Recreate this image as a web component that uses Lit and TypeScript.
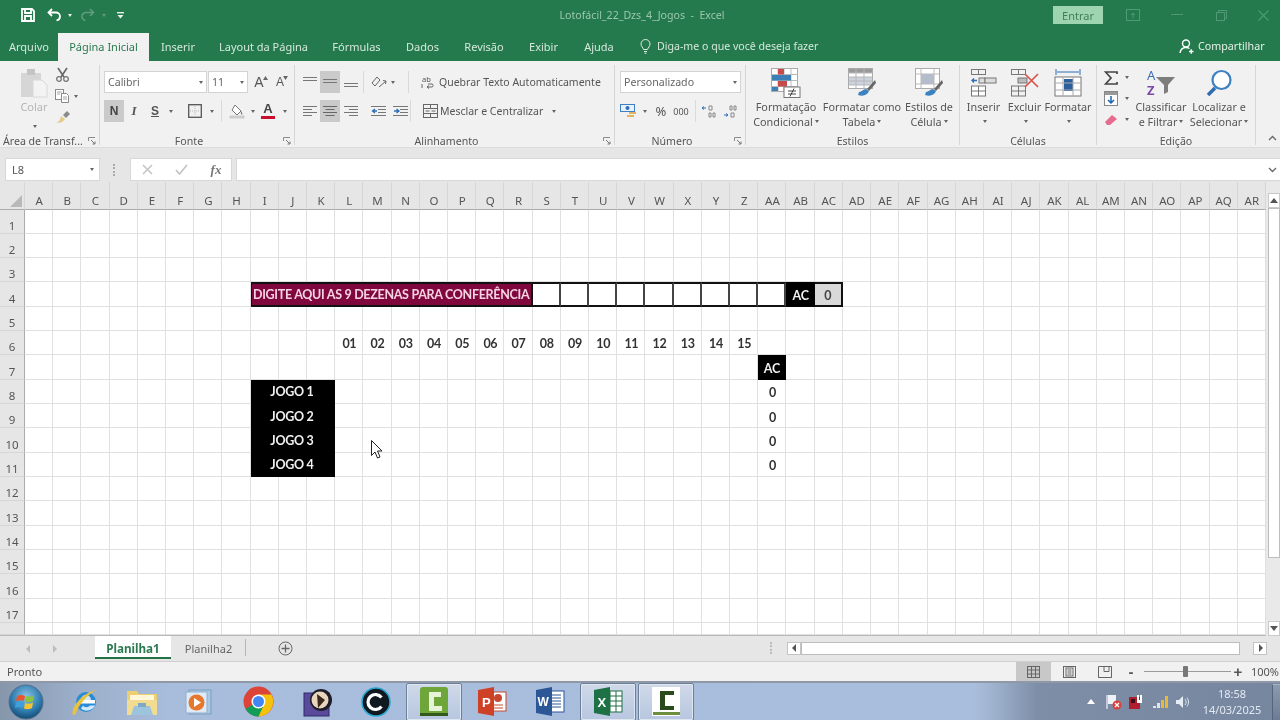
import { LitElement, html, css } from "lit";
import { customElement } from "lit/decorators.js";

type Item = [number, unknown, string?];
const row = (items: Item[], cls = "") => html`<div class="row ${cls}">${items.map(([w, c, k]) => html`<span class="s ${k ?? ""}" style="width:${w}px">${c}</span>`)}</div>`;
const caret = html`<i class="c"></i>`;
const wcaret = html`<i class="c w"></i>`;
const dcaret = html`<i class="c dim"></i>`;

const I = {
  save: html`<svg width="16" height="16" viewBox="0 0 16 16" fill="none" stroke="#fff" stroke-width="1.8"><path d="M2 2h10l2 2v10H2z"/><path d="M5 2v4h6V2M5 14V9h6v5"/></svg>`,
  undo: html`<svg width="16" height="14" viewBox="0 0 16 14" fill="none" stroke="#fff" stroke-width="1.8"><path d="M5 1L1.5 4.5 5 8M2 4.5h7a4 4 0 0 1 4 4c0 2-1.5 3.500-3.500 4"/></svg>`,
  redo: html`<svg width="16" height="14" viewBox="0 0 16 14" fill="none" stroke="#5f9d7b" stroke-width="1.6"><path d="M11 1l3.500 3.500L11 8M14 4.500H7a4 4 0 0 0-4 4c0 2 1.500 3.500 3.500 4"/></svg>`,
  qat: html`<svg width="7" height="7" viewBox="0 0 7 7" fill="#e8f2ec"><rect y="0" width="7" height="1.400"/><path d="M.5 3h6L3.500 6.500z"/></svg>`,
  touch: html`<svg width="14" height="12" viewBox="0 0 14 12" fill="none" stroke="#4f9a72"><rect x=".5" y=".5" width="13" height="11"/><path d="M7 9V4M5 6l2-2 2 2"/></svg>`,
  min: html`<svg width="12" height="2"><rect width="12" height="1" fill="#4f9a72"/></svg>`,
  rest: html`<svg width="11" height="11" viewBox="0 0 11 11" fill="none" stroke="#4f9a72"><rect x=".5" y="2.500" width="8" height="8"/><path d="M2.500 2.500V.5h8v8H8.500"/></svg>`,
  close: html`<svg width="11" height="11" viewBox="0 0 11 11" stroke="#4f9a72" stroke-width="1.100"><path d="M.5.5l10 10M10.500.5l-10 10"/></svg>`,
  bulb: html`<svg width="11" height="15" viewBox="0 0 11 15" fill="none" stroke="#dcebe2"><path d="M3.500 10.500C3 8.500 1 7.500 1 5a4.500 4.500 0 0 1 9 0c0 2.500-2 3.500-2.500 5.500zM4 12.500h3M4.500 14.200h2"/></svg>`,
  person: html`<svg width="15" height="15" viewBox="0 0 15 15" fill="none" stroke="#fff" stroke-width="1.400"><circle cx="7" cy="4.500" r="3.500"/><path d="M1 14c.5-3.500 2.500-5.500 6-5.500 1.500 0 2.500.4 3.500 1M10 12.500h4.500M12.200 10.300v4.400"/></svg>`,
  paste: html`<svg width="28" height="30" viewBox="0 0 28 30"><rect x="1" y="5" width="20" height="24" fill="#d6d6d6"/><rect x="7" y="1" width="8" height="6" fill="#c4c4c4"/><path d="M13 12h9l5 5v12H13z" fill="#f3f3f3" stroke="#d8d8d8"/></svg>`,
  scissors: html`<svg width="15" height="15" viewBox="0 0 15 15" fill="none" stroke="#777" stroke-width="1.300"><circle cx="4" cy="12" r="2.300"/><circle cx="11" cy="12" r="2.300"/><path d="M3 1l6 9M12 1L6 10" stroke="#666" stroke-width="1.600"/></svg>`,
  copy: html`<svg width="15" height="14" viewBox="0 0 15 14" fill="#fff" stroke="#8a8a8a"><rect x=".5" y=".5" width="8" height="10"/><path d="M6.500 4.500h5l2 2v7h-7z"/><path d="M2 3h5M2 5h3M8 8h4M8 10h4" stroke="#a5a5a5"/></svg>`,
  painter: html`<svg width="16" height="14" viewBox="0 0 16 14"><path d="M8 5l4-4 3 3-4 4z" fill="#8a8a8a"/><path d="M1 12c3 0 4-2 5-6l4 3c-2 3-5 5-9 3z" fill="#e6cc8b"/></svg>`,
  launcher: html`<svg width="8" height="8" viewBox="0 0 8 8" fill="none" stroke="#8c8c8c"><path d="M.5 4V.5H7"/><path d="M3 3l4 4M7 4.500V7H4.500" stroke="#777"/></svg>`,
  growA: html`<svg width="5" height="4" viewBox="0 0 5 4" fill="#666"><path d="M0 4l2.500-4L5 4z"/></svg>`,
  shrinkA: html`<svg width="5" height="4" viewBox="0 0 5 4" fill="#666"><path d="M0 0l2.500 4L5 0z"/></svg>`,
  border: html`<svg width="14" height="14" viewBox="0 0 14 14" fill="none"><rect x=".7" y=".7" width="12.600" height="12.600" stroke="#555" stroke-width="1.300"/><path d="M7 2v10M2 7h10" stroke="#bbb" stroke-dasharray="1 1"/></svg>`,
  fill: html`<svg width="16" height="15" viewBox="0 0 16 15"><path d="M6 1l6 6-4 4-5-5z" fill="#fff" stroke="#777"/><path d="M12 7c1 1.500 2 3 1 3.500s-1.500-1.500-1-3.500z" fill="#777"/><rect x="1" y="12" width="14" height="2" fill="#d9d9d9" stroke="#aaa" stroke-width=".5"/></svg>`,
  vt: html`<svg width="14" height="12" viewBox="0 0 14 12" stroke="#777"><path d="M0 1.500h14M0 4.500h14"/></svg>`,
  vm: html`<svg width="14" height="8" viewBox="0 0 14 8" stroke="#777"><path d="M0 1.500h14M0 4.500h14"/></svg>`,
  vb: html`<svg width="14" height="12" viewBox="0 0 14 12" stroke="#777"><path d="M0 7.500h14M0 10.500h14"/></svg>`,
  al: html`<svg width="14" height="12" viewBox="0 0 14 12" stroke="#777"><path d="M0 1.500h14M0 4.500h9M0 7.500h14M0 10.500h9"/></svg>`,
  ac: html`<svg width="14" height="12" viewBox="0 0 14 12" stroke="#666"><path d="M0 1.500h14M2.500 4.500h9M0 7.500h14M2.500 10.500h9"/></svg>`,
  ar: html`<svg width="14" height="12" viewBox="0 0 14 12" stroke="#777"><path d="M0 1.500h14M5 4.500h9M0 7.500h14M5 10.500h9"/></svg>`,
  orient: html`<svg width="17" height="15" viewBox="0 0 17 15" fill="none" stroke="#666"><path d="M2 8l5-6 3 3-5 6zM9 12l7-6M13 5.500l3 .5-.5 3" /></svg>`,
  outdent: html`<svg width="15" height="12" viewBox="0 0 15 12"><path d="M0 1.500h15M7 4.500h8M7 7.500h8M0 10.500h15" stroke="#777"/><path d="M6 6H2M4 4L1.500 6 4 8" fill="none" stroke="#2c6fb7" stroke-width="1.300"/></svg>`,
  indent: html`<svg width="15" height="12" viewBox="0 0 15 12"><path d="M0 1.500h15M7 4.500h8M7 7.500h8M0 10.500h15" stroke="#777"/><path d="M1 6h4M3.500 4L6 6 3.500 8" fill="none" stroke="#2c6fb7" stroke-width="1.300"/></svg>`,
  wrap: html`<svg width="16" height="16" viewBox="0 0 16 16"><text x="2" y="8" font-family="Noto Sans" font-size="7.500" fill="#555">ab</text><path d="M7 13h5c1.500 0 1.500-3 0-3H8M7 13l2-1.500M7 13l2 1.500M2 10v4" fill="none" stroke="#666"/></svg>`,
  merge: html`<svg width="15" height="14" viewBox="0 0 15 14" fill="none" stroke="#666"><rect x=".5" y=".5" width="14" height="13"/><path d="M.5 4.500h14M.5 9.500h14M2.500 7h4M12.500 7h-4M7.500 .5v4M7.500 9.500v4"/></svg>`,
  accounting: html`<svg width="17" height="17" viewBox="0 0 17 17"><rect x=".5" y="1.500" width="14" height="7" fill="#e8f1fa" stroke="#3b7fc4"/><circle cx="7.500" cy="5" r="2" fill="#2c6fb7"/><rect x="9" y="9" width="7" height="2" fill="#e3b35b"/><rect x="7" y="12" width="7" height="2" fill="#e3b35b"/></svg>`,
  decInc: html`<svg width="17" height="13" viewBox="0 0 17 13"><path d="M5 3H1M3 1.500L1 3l2 1.500" fill="none" stroke="#2c6fb7"/><path d="M8 1h3v4H8zM12 8h2v4h-2zM8 8h2v4H8z" fill="none" stroke="#888"/></svg>`,
  decDec: html`<svg width="17" height="13" viewBox="0 0 17 13"><path d="M1 10h4M3 8.500L5 10l-2 1.500" fill="none" stroke="#2c6fb7"/><path d="M7 1h2v4H7zM11 1h2v4h-2zM8 8h3v4H8z" fill="none" stroke="#888"/></svg>`,
  cond: html`<svg width="30" height="30" viewBox="0 0 30 30"><rect x=".5" y=".5" width="26" height="23" fill="#fff" stroke="#aaa"/><path d="M.5 6.500h26M.5 12.500h26M.5 18.500h26M7 .5v23M13 .5v23M20 .5v23" stroke="#bbb"/><rect x="7" y="1" width="6" height="5.500" fill="#c84a4a"/><rect x="1" y="7" width="19" height="5.500" fill="#3b7fb6"/><rect x="7" y="13" width="9" height="5.500" fill="#c84a4a"/><rect x="1" y="19" width="6" height="4" fill="#3b7fb6"/><rect x="13" y="19" width="16" height="10.500" fill="#fff" stroke="#777"/><path d="M17 23h8M17 26h8M23 20.500l-4 8" stroke="#444" fill="none"/></svg>`,
  table: html`<svg width="28" height="30" viewBox="0 0 28 30"><rect x=".5" y=".5" width="24" height="20" fill="#fff" stroke="#aaa"/><rect x="1" y="1" width="23" height="4" fill="#9a9a9a"/><rect x="1" y="9" width="23" height="8" fill="#ccd2de"/><path d="M.5 5h24M.5 9h24M.5 13h24M.5 17h24M8 .5v20M16 .5v20" stroke="#b8b8b8"/><path d="M27 12L19 21l2 2 7-8z" fill="#666"/><path d="M11 24c3 0 4-3 7-3l3 2c-1 3-5 6-11 4z" fill="#3c82c0"/></svg>`,
  styles: html`<svg width="28" height="30" viewBox="0 0 28 30"><rect x=".5" y=".5" width="24" height="20" fill="#fff" stroke="#aaa"/><rect x="6" y="6" width="13" height="10" fill="#b5bccb"/><path d="M6 .5v20M19 .5v20M.5 6h24M.5 16h24" stroke="#bbb"/><path d="M27 12L19 21l2 2 7-8z" fill="#666"/><path d="M11 24c3 0 4-3 7-3l3 2c-1 3-5 6-11 4z" fill="#3c82c0"/></svg>`,
  ins: html`<svg width="26" height="28" viewBox="0 0 26 28" fill="none" stroke="#777"><rect x=".5" y=".5" width="14" height="5"/><path d="M7.500.5v5"/><rect x=".5" y="17" width="14" height="10" fill="#fff"/><path d="M7.500 17v10M.5 22h14"/><rect x="8" y="9" width="6" height="5" fill="#ddd"/><rect x="14" y="9" width="11" height="5" fill="#ddd"/><path d="M6 11.500H1M3 9.500l-2 2 2 2" stroke="#2c6fb7" stroke-width="1.300"/></svg>`,
  del: html`<svg width="28" height="28" viewBox="0 0 28 28" fill="none" stroke="#777"><rect x=".5" y=".5" width="14" height="5"/><path d="M7.500.5v5"/><rect x=".5" y="17" width="14" height="10"/><path d="M7.500 17v10M.5 22h14"/><rect x="7" y="9" width="9" height="5" fill="#bbb"/><path d="M14 5l13 13M27 5L14 18" stroke="#d9534a" stroke-width="1.700"/></svg>`,
  fmt: html`<svg width="28" height="30" viewBox="0 0 28 30" fill="none" stroke="#777"><path d="M2 1v6M26 1v6M3 4h22" stroke="#2c6fb7"/><rect x="1" y="9" width="26" height="19" fill="#fff"/><rect x="10" y="11" width="9" height="12" fill="#2c5f9e" stroke="none"/><path d="M1 15h26M1 22h26M9 9v19M19 9v19" stroke="#aaa"/></svg>`,
  sigma: html`<svg width="14" height="14" viewBox="0 0 14 14" fill="none" stroke="#444" stroke-width="1.700"><path d="M13 3V1H1.500L7 7l-5.500 6H13v-2"/></svg>`,
  filldown: html`<svg width="14" height="15" viewBox="0 0 14 15"><rect x=".5" y=".5" width="13" height="14" fill="#fff" stroke="#888"/><rect x="1" y="1" width="12" height="3" fill="#999"/><path d="M7 5v7M4 9l3 3 3-3" fill="none" stroke="#1d63ad" stroke-width="1.500"/></svg>`,
  eraser: html`<svg width="14" height="12" viewBox="0 0 14 12"><path d="M1 8l7-7 5 4-7 6H3z" fill="#e66b8e"/></svg>`,
  sort: html`<svg class="ov" width="30" height="29" viewBox="0 0 30 29"><text x="1" y="12" font-family="Noto Sans" font-size="13" fill="#3c6fb4">A</text><text x="1" y="27" font-family="Noto Sans" font-size="13" font-weight="700" fill="#7a4aa8">Z</text><path d="M10 9h19l-7 8v7l-4 2V17z" fill="#7d7d7d"/></svg>`,
  find: html`<svg width="28" height="28" viewBox="0 0 28 28" fill="none"><circle cx="16.500" cy="11" r="9" stroke="#3c82c0" stroke-width="2.200" fill="#fff"/><path d="M3 26l7-7" stroke="#2f6db0" stroke-width="3.500"/></svg>`,
  chev: html`<svg width="9" height="6" viewBox="0 0 9 6" fill="none" stroke="#666" stroke-width="1.300"><path d="M1 5l3.500-3.500L8 5"/></svg>`,
  chevd: html`<svg width="9" height="6" viewBox="0 0 9 6" fill="none" stroke="#666" stroke-width="1.300"><path d="M1 1l3.500 3.500L8 1"/></svg>`,
  x: html`<svg width="11" height="11" viewBox="0 0 11 11" stroke="#c4c4c4" stroke-width="1.500"><path d="M1 1l9 9M10 1l-9 9"/></svg>`,
  check: html`<svg width="13" height="11" viewBox="0 0 13 11" fill="none" stroke="#c4c4c4" stroke-width="1.700"><path d="M1 6l3.500 4L12 1"/></svg>`,
  corner: html`<svg width="12" height="12" viewBox="0 0 12 12"><path d="M12 0v12H0z" fill="#b9b9b9"/></svg>`,
  plus: html`<svg width="15" height="15" viewBox="0 0 15 15" fill="none" stroke="#666"><circle cx="7.500" cy="7.500" r="6.500"/><path d="M3.500 7.500h8M7.500 3.500v8" stroke-width="1.300"/></svg>`,
  tl: html`<svg width="5" height="8" viewBox="0 0 5 8" fill="#bdbdbd"><path d="M4 0v8L0 4z"/></svg>`,
  tr: html`<svg width="5" height="8" viewBox="0 0 5 8" fill="#bdbdbd"><path d="M1 0v8l4-4z"/></svg>`,
  tld: html`<svg width="5" height="8" viewBox="0 0 5 8" fill="#555"><path d="M4 0v8L0 4z"/></svg>`,
  trd: html`<svg width="5" height="8" viewBox="0 0 5 8" fill="#555"><path d="M1 0v8l4-4z"/></svg>`,
  up: html`<svg width="8" height="5" viewBox="0 0 8 5" fill="#555"><path d="M0 5h8L4 0z"/></svg>`,
  dn: html`<svg width="8" height="5" viewBox="0 0 8 5" fill="#555"><path d="M0 0h8L4 5z"/></svg>`,
  vnormal: html`<svg width="13" height="12" viewBox="0 0 13 12" fill="none" stroke="#666"><rect x=".5" y=".5" width="12" height="11"/><path d="M4.500 .5v11M8.500 .5v11M.5 4h12M.5 8h12"/></svg>`,
  vpage: html`<svg width="13" height="12" viewBox="0 0 13 12" fill="none" stroke="#666"><rect x=".5" y=".5" width="12" height="11"/><rect x="3" y="2" width="7" height="8"/><path d="M4.500 4h4M4.500 6h4M4.500 8h4"/></svg>`,
  vbreak: html`<svg width="14" height="12" viewBox="0 0 14 12" fill="none" stroke="#666"><path d="M.5 11.500V.5h13v11zM6 .5v5h5V.5M.5 11.500h13" /></svg>`,
  orb: html`<svg width="36" height="36" viewBox="0 0 36 36"><defs><radialGradient id="o" cx=".5" cy=".35" r=".7"><stop offset="0" stop-color="#8fc5e6"/><stop offset=".6" stop-color="#2f7db0"/><stop offset="1" stop-color="#0e3f68"/></radialGradient></defs><circle cx="18" cy="18" r="17" fill="url(#o)" stroke="#52708c"/><path d="M9 12c3-1.500 5-1.500 8 0l-1 5c-3-1-5-1-8 0z" fill="#e8562f"/><path d="M18 12c3 1 5 1 8-.5l-1 5.500c-3 1.500-5 1.500-8 .5z" fill="#8bc43e"/><path d="M8 18c3-1 5-1 8 0l-1 6c-3-1.500-5-1.500-8 0z" fill="#3f9fdd"/><path d="M17 19c3 1 5 1 8-.5l-1 5.500c-3 1.500-5 1.500-8 .5z" fill="#f5c431"/></svg>`,
  ie: html`<svg width="30" height="30" viewBox="0 0 30 30"><circle cx="16" cy="15" r="10" fill="#2a8bd6"/><rect x="9" y="13" width="16" height="3.500" fill="#fff"/><path d="M11 13c0-3 2.500-5 5-5s5 2 5 5zM13 18.500c1 2 5 2.500 7 0h5c-2 5-10 7-14 3z" fill="#cfe8fa"/><path d="M3 28C0 22 12 5 27 3c-6 1-20 16-21 24z" fill="#e9c33f"/></svg>`,
  folder: html`<svg width="32" height="28" viewBox="0 0 32 28"><path d="M1 3h10l2 3h18v21H1z" fill="#eccf6f"/><rect x="4" y="7" width="24" height="5" fill="#fff7d8"/><path d="M1 12h30v15H1z" fill="#f2dc91"/><path d="M8 18h16l3 9H5z" fill="#9dc4dd"/><rect x="12" y="15" width="8" height="4" fill="#7da9c6"/></svg>`,
  wmp: html`<svg width="28" height="28" viewBox="0 0 28 28"><rect x="4" y="2" width="22" height="24" fill="#a9c8e4" stroke="#7b9cbd"/><rect x="1" y="4" width="21" height="21" fill="#dfeaf5" stroke="#8eb0d0"/><circle cx="11.500" cy="14.500" r="8" fill="#e8772e"/><path d="M9 10l7 4.500-7 4.500z" fill="#fff"/></svg>`,
  chrome: html`<svg width="31" height="31" viewBox="0 0 31 31"><circle cx="15.500" cy="15.500" r="15" fill="#db4437"/><path d="M15.500 15.500L2.500 23A15 15 0 0 0 15.500 30.500L23 15.500z" fill="#0f9d58"/><path d="M15.500 8.500h13A15 15 0 0 1 15.500 30.500l7-15z" fill="#f4c20d"/><circle cx="15.500" cy="15.500" r="7" fill="#fff"/><circle cx="15.500" cy="15.500" r="5.500" fill="#4285f4"/></svg>`,
  media: html`<svg width="30" height="30" viewBox="0 0 30 30"><rect x="1" y="6" width="25" height="23" fill="#5a4a9c" stroke="#2e2a66"/><circle cx="18" cy="13" r="11" fill="#1d1d2a"/><circle cx="17" cy="13" r="8.500" fill="#e9d6bd"/><path d="M14 7l8 6-7 8z" fill="#3a2a1e"/></svg>`,
  ccircle: html`<svg width="30" height="30" viewBox="0 0 30 30"><circle cx="15" cy="15" r="14" fill="#101820" stroke="#2aa7d0" stroke-width="1.500"/><path d="M20.500 10.500a7.500 7.500 0 1 0 0 9" fill="none" stroke="#fff" stroke-width="3.200"/></svg>`,
  cam: html`<svg width="30" height="31" viewBox="0 0 30 31"><rect x="1" y="1" width="28" height="29" rx="3" fill="#6ea63a"/><path d="M22 6H10v19h13v-5H15V11h7z" fill="#e7f3d8"/><rect x="1" y="27" width="28" height="3" fill="#33591d"/></svg>`,
  cam2: html`<svg width="30" height="31" viewBox="0 0 30 31"><rect x="1" y="1" width="28" height="29" fill="#fff"/><path d="M23 5H9v19h14v-4H14V9h9z" fill="#2a4a1c"/><rect x="2" y="26" width="27" height="3" fill="#6b8f3c"/></svg>`,
  ppt: html`<svg width="30" height="29" viewBox="0 0 30 29"><rect x="13" y="5" width="16" height="19" fill="#fff" stroke="#c8472f"/><circle cx="21" cy="11" r="4" fill="#c8472f"/><path d="M17 18h9M17 21h9" stroke="#c8472f"/><path d="M1 3l16-3v29L1 26z" fill="#cf4126"/><text x="5" y="20" font-family="Liberation Sans" font-weight="700" font-size="13" fill="#fff">P</text></svg>`,
  word: html`<svg width="30" height="29" viewBox="0 0 30 29"><rect x="13" y="4" width="16" height="21" fill="#fff" stroke="#2b5797"/><path d="M17 8h9M17 11h9M17 14h9M17 17h9M17 20h9" stroke="#2b5797"/><path d="M1 3l16-3v29L1 26z" fill="#2b5797"/><text x="2.500" y="19" font-family="Liberation Sans" font-weight="700" font-size="12" fill="#fff">W</text></svg>`,
  excel: html`<svg width="30" height="29" viewBox="0 0 30 29"><rect x="13" y="4" width="16" height="21" fill="#fff" stroke="#1e7145"/><path d="M17 4v21M23 4v21M13 9h16M13 14h16M13 19h16" stroke="#1e7145"/><path d="M1 3l16-3v29L1 26z" fill="#1e7145"/><text x="4.500" y="20" font-family="Liberation Sans" font-weight="700" font-size="13" fill="#fff">X</text></svg>`,
  trayup: html`<svg width="8" height="5" viewBox="0 0 8 5" fill="#fff"><path d="M0 5h8L4 0z"/></svg>`,
  flag: html`<svg width="16" height="16" viewBox="0 0 16 16"><path d="M1 1v14" stroke="#dde" stroke-width="1.500"/><path d="M2 1h8v9H2z" fill="#eef2f8"/><circle cx="11" cy="11" r="4.500" fill="#d8413e"/><path d="M9 9l4 4M13 9l-4 4" stroke="#fff" stroke-width="1.300"/></svg>`,
  shield: html`<svg width="16" height="16" viewBox="0 0 16 16"><rect x="1" y="3" width="11" height="12" fill="#b01e2e"/><rect x="3" y="5" width="4" height="4" fill="#3a1016"/><path d="M10 1v7M13 1v7" stroke="#fff" stroke-width="2"/><rect x="9" y="6" width="5" height="3" fill="#fff"/></svg>`,
  signal: html`<svg width="16" height="14" viewBox="0 0 16 14"><path d="M1 11h3v2H1z" fill="#dfe5ee"/><path d="M5 8h3v5H5z" fill="#dfe5ee"/><path d="M9 5h3v8H9z" fill="#e9b93a"/><path d="M13 1h3v12h-3z" fill="#e9b93a"/></svg>`,
  vol: html`<svg width="14" height="14" viewBox="0 0 14 14"><path d="M1 5h3l4-4v12L4 9H1z" fill="#e7edf5"/><path d="M10 4c1.500 2 1.500 4 0 6M12 2.500c2 3 2 6 0 9" fill="none" stroke="#dfe5ee"/></svg>`,
};

const cols = Array.from({ length: 44 }, (_, i) => (i < 26 ? String.fromCharCode(65 + i) : "A" + String.fromCharCode(65 + i - 26)));

type Cell = { c: number; r: number; cs?: number; text?: string; k?: string };
function buildCells(): Cell[] {
  const out: Cell[] = [];
  const taken = new Set<string>();
  const put = (x: Cell) => {
    out.push(x);
    for (let i = 0; i < (x.cs ?? 1); i++) taken.add(`${x.c + i}:${x.r}`);
  };
  put({ c: 8, r: 4, cs: 10, text: "DIGITE AQUI AS 9 DEZENAS PARA CONFERÊNCIA", k: "banner" });
  for (let i = 18; i < 27; i++) put({ c: i, r: 4, k: "inp" });
  put({ c: 27, r: 4, text: "AC", k: "black edge" });
  put({ c: 28, r: 4, text: "0", k: "gray" });
  for (let i = 0; i < 15; i++) put({ c: 11 + i, r: 6, text: String(i + 1).padStart(2, "0"), k: "b" });
  put({ c: 26, r: 7, text: "AC", k: "black low" });
  for (let i = 0; i < 4; i++) {
    put({ c: 8, r: 8 + i, cs: 3, text: `JOGO ${i + 1}`, k: "black jogo" });
    put({ c: 26, r: 8 + i, text: "0", k: "b low" });
  }
  for (let r = 1; r <= 18; r++) for (let c = 0; c < 44; c++) if (!taken.has(`${c}:${r}`)) put({ c, r });
  return out;
}
const cells = buildCells();

const tabs: [string, number, string?][] = [["Arquivo", 58], ["Página Inicial", 91, "active"], ["Inserir", 58], ["Layout da Página", 113], ["Fórmulas", 73], ["Dados", 59], ["Revisão", 64], ["Exibir", 55], ["Ajuda", 56]];

const big = (w: number, icon: unknown, l1: string, l2: unknown) => html`
  <div class="big" style="width:${w}px"><div class="bi">${icon}</div><div class="bl">${l1}</div><div class="bl">${l2}</div></div>`;

const group = (w: number, label: string, labelCls: string, launcher: boolean, body: unknown) => html`
  <section class="group" style="width:${w}px"><div class="gb">${body}</div><div class="gl ${labelCls} ${launcher ? "hasl" : ""}"><span>${label}</span>${launcher ? html`<span class="lau">${I.launcher}</span>` : ""}</div></section>`;

const taskItems: [unknown, number, string?][] = [[I.ie, 57.5], [I.folder, 56.5], [I.wmp, 58.5], [I.chrome, 60], [I.media, 58], [I.ccircle, 58], [I.cam, 58.5, "on"], [I.ppt, 58], [I.word, 58], [I.excel, 58, "on"], [I.cam2, 58, "on"]];

@customElement("app-root")
export class AppRoot extends LitElement {
  static styles = css`
    :host { display: block; width: 1280px; height: 720px; overflow: hidden; font-family: "Noto Sans", "Open Sans", sans-serif; font-size: 11px; color: #555; }
    .app { width: 1280px; height: 720px; display: flex; flex-direction: column; position: relative; background: #f1f1f1; filter: blur(0.3px); }
    .row { display: flex; align-items: center; height: 22px; }
    .s { display: flex; align-items: center; justify-content: center; flex: none; height: 100%; }
    .c { display: inline-block; flex: none; width: 0; height: 0; border: 2.5px solid transparent; border-top: 3px solid #666; border-bottom: 0; margin-left: 2px; vertical-align: middle; }
    .c.w { border-top-color: #e8f2ec; }
    .c.dim { border-top-color: #5f9d7b; }
    svg { display: block; flex: none; }
    svg.ov { overflow: visible; }

    .title { height: 33px; background: #247a4c; display: grid; grid-template-columns: 402px 480px 398px; align-items: center; padding-bottom: 3px; box-sizing: border-box; }
    .title .row { height: 30px; }
    .doc { text-align: center; color: #9cc7ad; font-size: 10.6px; white-space: pre; }
    .entrar { width: 50px; height: 18px; background: #9fd4b0; color: #3f7f5b; display: flex; align-items: center; justify-content: center; font-size: 11px; }

    .tabs { height: 28px; background: #247a4c; display: flex; align-items: stretch; color: #d5e8dc; }
    .tab { display: flex; align-items: center; justify-content: center; flex: none; padding-bottom: 2px; box-sizing: border-box; }
    .tab.active { background: #f1f1f1; color: #2a7a50; }
    .tell { margin-left: 13px; display: flex; align-items: center; gap: 6px; color: #d5e8dc; padding-bottom: 2px; font-size: 10.6px; }
    .share { margin-left: auto; width: 101px; display: flex; align-items: center; gap: 4px; color: #e6f1ea; padding-bottom: 2px; font-size: 10.7px; }

    .ribbon { height: 87px; background: #f1f1f1; display: flex; padding-top: 4px; box-sizing: border-box; border-bottom: 1px solid #dcdcdc; }
    .group { flex: none; height: 80px; border-right: 1px solid #d6d6d6; box-sizing: border-box; display: flex; flex-direction: column; }
    .gb { height: 66px; flex: none; display: flex; }
    .gl { flex: 1; display: flex; align-items: center; justify-content: center; position: relative; font-size: 10.6px; color: #555; padding-top: 3px; box-sizing: border-box; }
    .gl.hasl { padding-right: 16px; }
    .gl.left { justify-content: flex-start; padding-left: 3px; padding-right: 0; }
    .lau { position: absolute; right: 3px; top: 6px; }
    .col { display: flex; flex-direction: column; }
    .rows { padding-top: 6px; gap: 7px; }
    .box { height: 22px; background: #fff; border: 1px solid #d3d3d3; box-sizing: border-box; display: flex; align-items: center; justify-content: space-between; padding: 0 3px; font-size: 10.6px; color: #666; }
    .sel { background: #cacaca; }
    .bld { font-weight: 700; font-size: 12px; color: #444; font-family: "Liberation Sans", sans-serif; }
    .ital { font-style: italic; font-size: 13px; font-family: "Liberation Serif", serif; font-weight: 700; color: #555; }
    .und { text-decoration: underline; font-weight: 700; font-size: 12px; font-family: "Liberation Sans", sans-serif; }
    .vsep { border-right: 1px solid #dadada; height: 22px; box-sizing: border-box; }
    .ftxt { justify-content: flex-start; white-space: nowrap; color: #555; font-size: 10.5px; }
    .A1 { font-family: "Liberation Sans", sans-serif; font-size: 14px; color: #555; align-items: center; padding-left: 2px; box-sizing: border-box; }
    .A1 svg { align-self: flex-start; margin: 5px 0 0 -1px; }
    .A2 { font-size: 12px; }
    .fcolor { flex-direction: column; gap: 1px; }
    .fcolor b { font-family: "Liberation Sans", sans-serif; font-size: 13px; line-height: 12px; color: #444; }
    .fcolor u { display: block; width: 14px; height: 3px; background: #c8102e; }
    .big { display: flex; flex-direction: column; align-items: center; flex: none; }
    .bi { height: 34px; display: flex; align-items: center; justify-content: center; padding-top: 1px; box-sizing: border-box; }
    .bl { height: 15px; line-height: 15px; white-space: nowrap; color: #555; display: flex; align-items: center; font-size: 10.8px; }
    .mini { width: 37px; padding: 2px 0 0 7px; box-sizing: border-box; }
    .mini .row { height: 21px; justify-content: flex-start; gap: 5px; }
    .spacer14 { width: 14px; flex: none; }
    .spacer2 { width: 2px; flex: none; }
    .colar { width: 40px; align-items: center; color: #b5b5b5; padding-top: 3px; flex: none; }
    .colar div:nth-child(2) { margin-top: 1px; line-height: 15px; }
    .colar div:nth-child(3) { margin-top: 3px; }
    .mcol { width: 24px; align-items: flex-start; gap: 7px; padding: 2px 0 0 1px; box-sizing: border-box; flex: none; }
    .mcol div { display: flex; align-items: center; }
    .mcol .c { margin-left: 4px; }
    .chevwrap { display: flex; align-items: flex-end; padding: 0 0 6px 12px; }

    .fbar { height: 34px; background: #e6e6e6; display: flex; align-items: flex-start; padding-top: 10px; box-sizing: border-box; flex: none; }
    .namebox { margin-left: 5px; width: 95px; height: 23px; background: #fff; border: 1px solid #d8d8d8; box-sizing: border-box; display: flex; align-items: center; justify-content: space-between; padding: 0 5px 0 6px; color: #555; }
    .dots { width: 30px; height: 23px; display: flex; align-items: center; justify-content: center; }
    .dots i { display: block; width: 2px; height: 12px; border-left: 2px dotted #aaa; }
    .fx { width: 102px; height: 23px; background: #fff; border: 1px solid #d8d8d8; box-sizing: border-box; display: flex; }
    .fx .row { height: 21px; }
    .fxt { font-family: "Liberation Serif", serif; font-style: italic; font-weight: 700; font-size: 13px; color: #777; }
    .finput { margin-left: 4px; width: 1044px; height: 23px; background: #fff; border: 1px solid #d8d8d8; border-right: 0; box-sizing: border-box; display: flex; align-items: center; justify-content: flex-end; padding-right: 3px; }

    .sheetwrap { height: 454px; flex: none; display: flex; background: #fff; }
    .sheet { width: 1266px; display: grid; grid-template-columns: 25px repeat(44, 28.21px); grid-template-rows: 27.5px repeat(17, 24.33px) 1fr; border-bottom: 1px solid #b9b9b9; box-sizing: border-box; font-family: Lato, "Liberation Sans", sans-serif; overflow: hidden; }
    .corner { background: #e6e6e6; border-bottom: 1px solid #ababab; border-right: 1px solid #d8d8d8; display: flex; align-items: flex-end; justify-content: flex-end; padding: 0 2px 2px 0; box-sizing: border-box; }
    .ch { background: #e6e6e6; border-bottom: 1px solid #ababab; border-right: 1px solid #d6d6d6; box-sizing: border-box; display: flex; align-items: flex-end; justify-content: center; padding: 0 0 0 1px; font-family: "Noto Sans", sans-serif; font-size: 11.5px; line-height: 17px; color: #555; }
    .rh { background: #e6e6e6; border-bottom: 1px solid #d6d6d6; border-right: 1px solid #ababab; box-sizing: border-box; display: flex; align-items: center; justify-content: center; padding-top: 8px; font-family: "Noto Sans", sans-serif; font-size: 11.5px; color: #555; }
    .cell { border-right: 1px solid #e0e0e0; border-bottom: 1px solid #e0e0e0; box-sizing: border-box; display: flex; align-items: center; justify-content: center; white-space: nowrap; font-size: 12.5px; letter-spacing: -0.3px; font-weight: 700; color: #333; background: #fff; min-width: 0; }
    .cell.b { padding: 2px 0 0 1px; }
    .cell.low { padding-top: 3px; }
    .banner { background: #7f073d; color: #f6d3e2; border: 2px solid #111; margin-left: -1px; }
    .inp { border-top: 2px solid #111; border-bottom: 2px solid #111; border-right: 2px solid #444; }
    .black { background: #000; color: #f0f0f0; border-color: #000; }
    .jogo { margin-left: -1px; padding-top: 1px; }
    .edge { border: 2px solid #000; padding-top: 1px; }
    .gray { background: #d9d9d9; color: #444; border: 2px solid #111; border-left: 0; padding-top: 1px; }

    .vs { width: 14px; background: #e9e9e9; display: flex; flex-direction: column; align-items: center; padding: 11px 0 0 2px; box-sizing: border-box; }
    .vs .ar { height: 15px; width: 12px; background: #fff; display: flex; align-items: center; justify-content: center; border: 1px solid #c9c9c9; box-sizing: border-box; flex: none; }
    .vs .th { height: 350px; width: 12px; background: #fff; border: 1px solid #bdbdbd; box-sizing: border-box; flex: none; }
    .vs .sp { flex: 1; }

    .stabs { height: 26px; flex: none; background: #e6e6e6; display: flex; align-items: stretch; border-bottom: 1px solid #cfcfcf; box-sizing: border-box; }
    .stabs > .row { height: 100%; }
    .sht1 { width: 76px; background: #fff; border-bottom: 2px solid #217346; box-sizing: border-box; height: 23px; display: flex; align-items: center; justify-content: center; padding-top: 2px; font-weight: 700; font-size: 11.7px; color: #2b7a52; flex: none; }
    .sht2 { width: 75px; height: 23px; display: flex; align-items: center; justify-content: center; padding-top: 2px; box-sizing: border-box; font-size: 11px; color: #666; flex: none; position: relative; }
    .sht2::after { content: ""; position: absolute; right: 0; top: 3px; height: 17px; border-right: 1px solid #b5b5b5; }
    .hscroll { margin-left: auto; display: flex; align-items: center; height: 24px; padding-right: 13px; }
    .hd { width: 16px; display: flex; justify-content: center; margin-right: 8px; }
    .hd i { display: block; height: 12px; border-left: 2px dotted #bbb; }
    .hb { width: 14px; height: 13px; background: #fff; border: 1px solid #c4c4c4; box-sizing: border-box; display: flex; align-items: center; justify-content: center; flex: none; }
    .ht { width: 439px; height: 13px; background: #fff; border: 1px solid #bdbdbd; box-sizing: border-box; flex: none; }
    .hg { width: 13px; }

    .status { height: 21px; flex: none; background: #f1f1f1; display: flex; align-items: center; border-bottom: 2px solid #8e98a6; box-sizing: border-box; padding-left: 7px; color: #555; }
    .status > .row { height: 19px; margin-left: auto; }
    .vsel { background: #c8c8c8; }
    .slider { width: 87px; height: 1px; background: #9a9a9a; position: relative; }
    .slider i { position: absolute; left: 39px; top: -5px; width: 5px; height: 11px; background: #777; border-radius: 1px; }
    .pm { font-family: "Liberation Sans", sans-serif; font-size: 15px; font-weight: 700; color: #555; }

    .task { height: 37px; flex: none; display: flex; align-items: stretch; background: linear-gradient(90deg, #8696ab 0, #9aadc8 70px, #a8bddc 170px, #a9bedd 76%, #a4b8d5 77%, #7e8ea7 81%, #76869f 100%); }
    .start { width: 56px; height: 37px; flex: none; display: flex; align-items: center; padding-left: 8px; box-sizing: border-box; }
    .tb { display: flex; align-items: center; justify-content: center; flex: none; height: 37px; box-sizing: border-box; }
    .tb.on > span { width: 54px; height: 36px; display: flex; align-items: center; justify-content: center; border: 1px solid #6f7f97; border-radius: 2px; background: linear-gradient(#cfd9e9, #b7c7df); box-shadow: inset 0 0 0 1px #dde6f1; }
    .tray { margin-left: auto; display: flex; align-items: center; }
    .clock { width: 68px; text-align: center; color: #e3e9f2; font-size: 11px; line-height: 16px; }
    .desk { width: 8px; height: 36px; background: linear-gradient(#8c9ab0, #6d7c94); border-left: 1px solid #56657c; border-top: 1px solid #a8b3c4; box-sizing: border-box; margin-left: 6px; }

    .cursor { position: absolute; left: 371px; top: 440px; }
  `;

  render() {
    return html`<div class="app">
      <header class="title">
        ${row([[20, ""], [16, I.save], [11, ""], [16, I.undo], [2, ""], [8, wcaret], [6, ""], [16, I.redo], [4, ""], [8, dcaret], [8, ""], [10, I.qat]])}
        <div class="doc">Lotofácil_22_Dzs_4_Jogos  -  Excel</div>
        ${row([[171, ""], [50, html`<div class="entrar">Entrar</div>`], [10, ""], [40, I.touch], [17, ""], [14, I.min], [30, ""], [14, I.rest], [28, ""], [14, I.close]])}
      </header>
      <nav class="tabs">
        ${tabs.map(([t, w, k]) => html`<div class="tab ${k ?? ""}" style="width:${w}px">${t}</div>`)}
        <div class="tell">${I.bulb}<span>Diga-me o que você deseja fazer</span></div>
        <div class="share">${I.person}<span>Compartilhar</span></div>
      </nav>
      <div class="ribbon">
        ${group(100, "Área de Transf...", "left", true, html`
          <div class="spacer14"></div>
          <div class="col colar"><div>${I.paste}</div><div>Colar</div><div>${caret}</div></div>
          <div class="col mcol"><div>${I.scissors}</div><div>${I.copy}${caret}</div><div>${I.painter}</div></div>`)}
        ${group(195, "Fonte", "", true, html`
          <div class="col rows">
            ${row([[4, ""], [103, html`<div class="box" style="width:103px"><span>Calibri</span>${caret}</div>`], [1, ""], [40, html`<div class="box" style="width:40px"><span>11</span>${caret}</div>`], [1, ""], [22, html`<span>A</span>${I.growA}`, "A1"], [20, html`<span class="A2">A</span>${I.shrinkA}`, "A1"]])}
            ${row([[4, ""], [20, html`<span class="bld">N</span>`, "sel"], [20, html`<span class="ital">I</span>`], [1, ""], [20, html`<span class="und">S</span>`], [10, caret], [12, ""], [16, I.border], [3, ""], [10, caret], [6, "", "vsep"], [7, ""], [16, I.fill], [2, ""], [10, caret], [3, ""], [16, html`<b>A</b><u></u>`, "fcolor"], [16, caret]])}
          </div>`)}
        ${group(320, "Alinhamento", "", true, html`
          <div class="col rows">
            ${row([[4, ""], [21, I.vt], [20, I.vm, "sel"], [21, I.vb], [3, "", "vsep"], [6, ""], [17, I.orient], [10, caret], [12, "", "vsep"], [11, ""], [16, I.wrap], [3, ""], [170, "Quebrar Texto Automaticamente", "ftxt"]])}
            ${row([[4, ""], [21, I.al], [20, I.ac, "sel"], [21, I.ar], [9, ""], [16, I.outdent], [6, ""], [16, I.indent], [3, "", "vsep"], [11, ""], [16, I.merge], [2, ""], [107, "Mesclar e Centralizar", "ftxt"], [12, caret]])}
          </div>`)}
        ${group(131, "Número", "", true, html`
          <div class="col rows">
            ${row([[5, ""], [121, html`<div class="box" style="width:121px"><span>Personalizado</span>${caret}</div>`]])}
            ${row([[5, ""], [17, I.accounting], [14, caret], [2, ""], [16, html`<span style="font-size:13px">%</span>`], [2, ""], [20, html`<span style="font-size:9px">000</span>`], [5, "", "vsep"], [5, ""], [17, I.decInc], [5, ""], [17, I.decDec]])}
          </div>`)}
        ${group(214, "Estilos", "", false, html`
          <div class="spacer2"></div>
          ${big(76, I.cond, "Formatação", html`Condicional${caret}`)}
          ${big(76, I.table, "Formatar como", html`Tabela${caret}`)}
          ${big(58, I.styles, "Estilos de", html`Célula${caret}`)}`)}
        ${group(137, "Células", "", false, html`
          ${big(47, I.ins, "Inserir", caret)}
          ${big(35, I.del, "Excluir", caret)}
          ${big(52, I.fmt, "Formatar", caret)}`)}
        ${group(159, "Edição", "", false, html`
          <div class="col mini">
            <div class="row">${I.sigma}${caret}</div>
            <div class="row">${I.filldown}${caret}</div>
            <div class="row">${I.eraser}${caret}</div>
          </div>
          ${big(54, I.sort, "Classificar", html`e Filtrar${caret}`)}
          ${big(62, I.find, "Localizar e", html`Selecionar${caret}`)}`)}
        <div class="chevwrap">${I.chev}</div>
      </div>
      <div class="fbar">
        <div class="namebox"><span>L8</span>${caret}</div>
        <div class="dots"><i></i></div>
        <div class="fx">${row([[11, ""], [11, I.x], [22, ""], [13, I.check], [21, ""], [14, html`<span class="fxt">fx</span>`]])}</div>
        <div class="finput">${I.chevd}</div>
      </div>
      <div class="sheetwrap">
        <div class="sheet">
          <div class="corner">${I.corner}</div>
          ${cols.map((c) => html`<div class="ch">${c}</div>`)}
          ${Array.from({ length: 18 }, (_, i) => html`<div class="rh" style="grid-area:${i + 2}/1">${i < 17 ? i + 1 : ""}</div>`)}
          ${cells.map((x) => html`<div class="cell ${x.k ?? ""}" style="grid-area:${x.r + 1}/${x.c + 2}/span 1/span ${x.cs ?? 1}">${x.text ?? ""}</div>`)}
        </div>
        <div class="vs"><div class="ar">${I.up}</div><div class="th"></div><div class="sp"></div><div class="ar">${I.dn}</div></div>
      </div>
      <div class="stabs">
        ${row([[28, ""], [1, I.tl], [25, ""], [1, I.tr], [40, ""]])}
        <div class="sht1">Planilha1</div>
        <div class="sht2">Planilha2</div>
        ${row([[32, ""], [15, I.plus]])}
        <div class="hscroll">
          <div class="hd"><i></i></div>
          <div class="hb">${I.tld}</div><div class="ht"></div><div class="hg"></div><div class="hb">${I.trd}</div>
        </div>
      </div>
      <div class="status">
        <span>Pronto</span>
        ${row([[35, I.vnormal, "vsel"], [1, ""], [35, I.vpage], [1, ""], [34, I.vbreak], [2, ""], [14, html`<span class="pm">-</span>`], [6, ""], [87, html`<div class="slider"><i></i></div>`], [0, ""], [14, html`<span class="pm">+</span>`], [5, ""], [30, "100%"]])}
      </div>
      <div class="task">
        <div class="start">${I.orb}</div>
        ${taskItems.map(([ic, w, k]) => html`<div class="tb ${k ?? ""}" style="width:${w}px"><span>${ic}</span></div>`)}
        <div class="tray">
          ${row([[8, I.trayup], [11, ""], [16, I.flag], [6, ""], [16, I.shield], [8, ""], [16, I.signal], [7, ""], [14, I.vol], [9, ""]])}
          <div class="clock">18:58<br />14/03/2025</div>
          <div class="desk"></div>
        </div>
      </div>
      <svg class="cursor" width="12" height="19" viewBox="0 0 12 19"><path d="M.5.5v15l3.500-3.500 2.500 6 2.500-1-2.500-6H11z" fill="#fff" stroke="#222"/></svg>
    </div>`;
  }
}
